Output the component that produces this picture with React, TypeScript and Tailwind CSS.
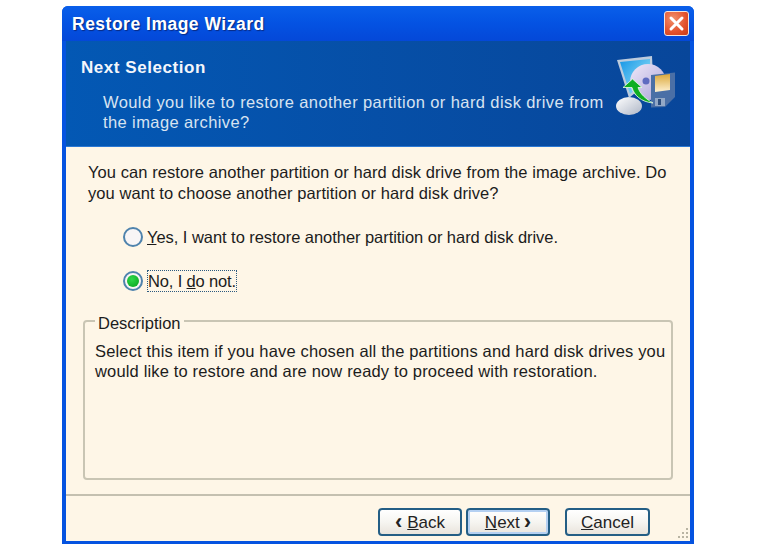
const FONT = "font-['Liberation_Sans',Arial,sans-serif]";

function CloseButton() {
  return (
    <button
      type="button"
      aria-label="Close"
      className="flex h-[25px] w-[25px] items-center justify-center rounded-[3px] border border-[#f3e4de] bg-[radial-gradient(circle_at_35%_30%,#f2906c,#e2512c_60%,#c93a18)]"
    >
      <svg width="17" height="17" viewBox="0 0 17 17">
        <path d="M3 3l11 11M14 3L3 14" stroke="#fff" strokeWidth="3" strokeLinecap="round" />
      </svg>
    </button>
  );
}

function WizardIcon() {
  return (
    <svg width="64" height="64" viewBox="0 0 64 64">
      <defs>
        <linearGradient id="screen" x1="0" y1="0" x2="1" y2="1">
          <stop offset="0" stopColor="#1596e6" />
          <stop offset="1" stopColor="#a6ecfb" />
        </linearGradient>
        <linearGradient id="disc" x1="0" y1="0" x2="1" y2="1">
          <stop offset="0" stopColor="#f0e8f8" />
          <stop offset="1" stopColor="#a8a2d8" />
        </linearGradient>
        <linearGradient id="label" x1="0" y1="0" x2="0" y2="1">
          <stop offset="0" stopColor="#dba83a" />
          <stop offset="1" stopColor="#fdf0d2" />
        </linearGradient>
        <linearGradient id="base" x1="0" y1="0" x2="1" y2="1">
          <stop offset="0" stopColor="#ffffff" />
          <stop offset="1" stopColor="#aeb6c6" />
        </linearGradient>
      </defs>
      <ellipse cx="13" cy="52" rx="13" ry="9" fill="url(#base)" />
      <path d="M1 6 L36 2 L37 24 L13 44 Z" fill="#bccbdd" />
      <path d="M4 8 L34 5 L34 24 L14 40 Z" fill="url(#screen)" />
      <circle cx="32" cy="28" r="18" fill="url(#disc)" />
      <circle cx="30" cy="27" r="3.5" fill="#5f6bc0" />
      <path d="M35 21 L59 18.5 L59 43 L49 53 L35 53.5 Z" fill="#4a6fa6" />
      <path d="M39 22 L54 20 L54 36 L39 38 Z" fill="url(#label)" />
      <path d="M39 44 L49 44 L49 52 L39 52 Z" fill="#93a8c6" />
      <rect x="42" y="45" width="3" height="6" fill="#2e4e7e" />
      <path d="M37 49 C25 48 18 41 16 33.5 L7 33.5 L16.5 25 L26 33.5 L22 33.5 C24 40 30 45 37 49 Z" fill="#0fae22" stroke="#e8fbe8" strokeWidth="0.8" />
    </svg>
  );
}

function Radio({ checked }: { checked?: boolean }) {
  return (
    <span className="flex h-[20px] w-[20px] shrink-0 items-center justify-center rounded-full border-2 border-[#4f83ad] bg-[#f8f5f6]">
      {checked && <span className="h-[12px] w-[12px] rounded-full bg-[radial-gradient(circle_at_40%_35%,#2fd84a,#05a01c)]" />}
    </span>
  );
}

function WizardButton({ children, className }: { children: React.ReactNode; className?: string }) {
  return (
    <button
      type="button"
      className={`flex h-[28px] items-center justify-center rounded-[4px] border-2 border-[#245e85] bg-gradient-to-b from-white via-[#f6f5f1] to-[#e9e4dc] text-[17px] leading-none text-[#222] ${className ?? ''}`}
    >
      {children}
    </button>
  );
}

export default function App() {
  return (
    <div className={`${FONT} h-[559px] w-[760px] overflow-hidden bg-white pl-[62px] pt-[6px]`}>
      <div className="flex h-[538px] w-[632px] flex-col rounded-t-[6px] bg-[#0553e0]">
        <div className="flex h-[35px] shrink-0 items-center justify-between rounded-t-[6px] bg-gradient-to-b from-[#0a5fea] via-[#0452e2] to-[#0448d8] pl-[10px] pr-[5px]">
          <span className="pt-[1px] text-[17.5px] font-bold tracking-[0.5px] text-white [text-shadow:1px_1px_1px_#0a2a80]">
            Restore Image Wizard
          </span>
          <CloseButton />
        </div>

        <div className="mx-[4px] flex h-[105px] shrink-0 justify-between bg-gradient-to-r from-[#0358b4] to-[#08469a] pl-[15px] pr-[10px] pt-[17px]">
          <div className="w-[530px]">
            <h1 className="text-[17px] font-bold leading-[20px] tracking-[0.55px] text-[#f4f6fb]">Next Selection</h1>
            <p className="ml-[22px] mt-[14px] text-[16.5px] leading-[20px] tracking-[0.4px] text-[#d7e3f1]">
              Would you like to restore another partition or hard disk drive from the image archive?
            </p>
          </div>
          <div className="-mt-[4px]">
            <WizardIcon />
          </div>
        </div>

        <div className="mx-[4px] mb-[3px] flex min-h-0 flex-1 flex-col border-t border-[#2a78d4] bg-[#fef6e7] text-[16.5px] text-[#1c1c1c]">
          <div className="flex-1 pl-[22px] pr-[17px] pt-[15px]">
            <p className="leading-[21px] tracking-[0.075px]">
              You can restore another partition or hard disk drive from the image archive. Do you want to choose another partition or hard disk drive?
            </p>
            <div className="ml-[35px] mt-[21px] flex h-[24px] items-center gap-[4px]">
              <Radio />
              <span className="tracking-[-0.05px]">
                <u>Y</u>es, I want to restore another partition or hard disk drive.
              </span>
            </div>
            <div className="ml-[35px] mt-[20px] flex h-[24px] items-center gap-[4px]">
              <Radio checked />
              <span className="border border-dotted border-[#2c5a80] leading-[20px] tracking-[-0.15px]">
                No, I <u>d</u>o not.
              </span>
            </div>
            <fieldset className="-ml-[5px] mt-[16px] h-[171px] w-[590px] rounded-[4px] border-2 border-[#c9c5b4] pl-[10px]">
              <legend className="px-[3px] pt-[4px] leading-[20px]">Description</legend>
              <p className="mt-[8px] leading-[20px] tracking-[0.16px]">
                Select this item if you have chosen all the partitions and hard disk drives you would like to restore and are now ready to proceed with restoration.
              </p>
            </fieldset>
          </div>
          <div className="relative flex h-[47px] shrink-0 items-start border-t-2 border-[#c4c0b0] pl-[312px] pt-[12px]">
            <WizardButton className="w-[84px]">
              <span className="mr-[5px] text-[22px] font-bold">‹</span>
              <span><u>B</u>ack</span>
            </WizardButton>
            <WizardButton className="ml-[4px] w-[84px] shadow-[inset_0_0_0_2px_#b4d0f2]">
              <span><u>N</u>ext</span>
              <span className="ml-[4px] text-[22px] font-bold">›</span>
            </WizardButton>
            <WizardButton className="ml-[15px] w-[85px]">
              <span><u>C</u>ancel</span>
            </WizardButton>
            <svg className="absolute bottom-[1px] right-[1px]" width="13" height="13" viewBox="0 0 13 13" fill="#b9b4a3">
              <rect x="10" y="1" width="2" height="2" />
              <rect x="6" y="5" width="2" height="2" />
              <rect x="10" y="5" width="2" height="2" />
              <rect x="2" y="9" width="2" height="2" />
              <rect x="6" y="9" width="2" height="2" />
              <rect x="10" y="9" width="2" height="2" />
            </svg>
          </div>
        </div>
      </div>
    </div>
  );
}
